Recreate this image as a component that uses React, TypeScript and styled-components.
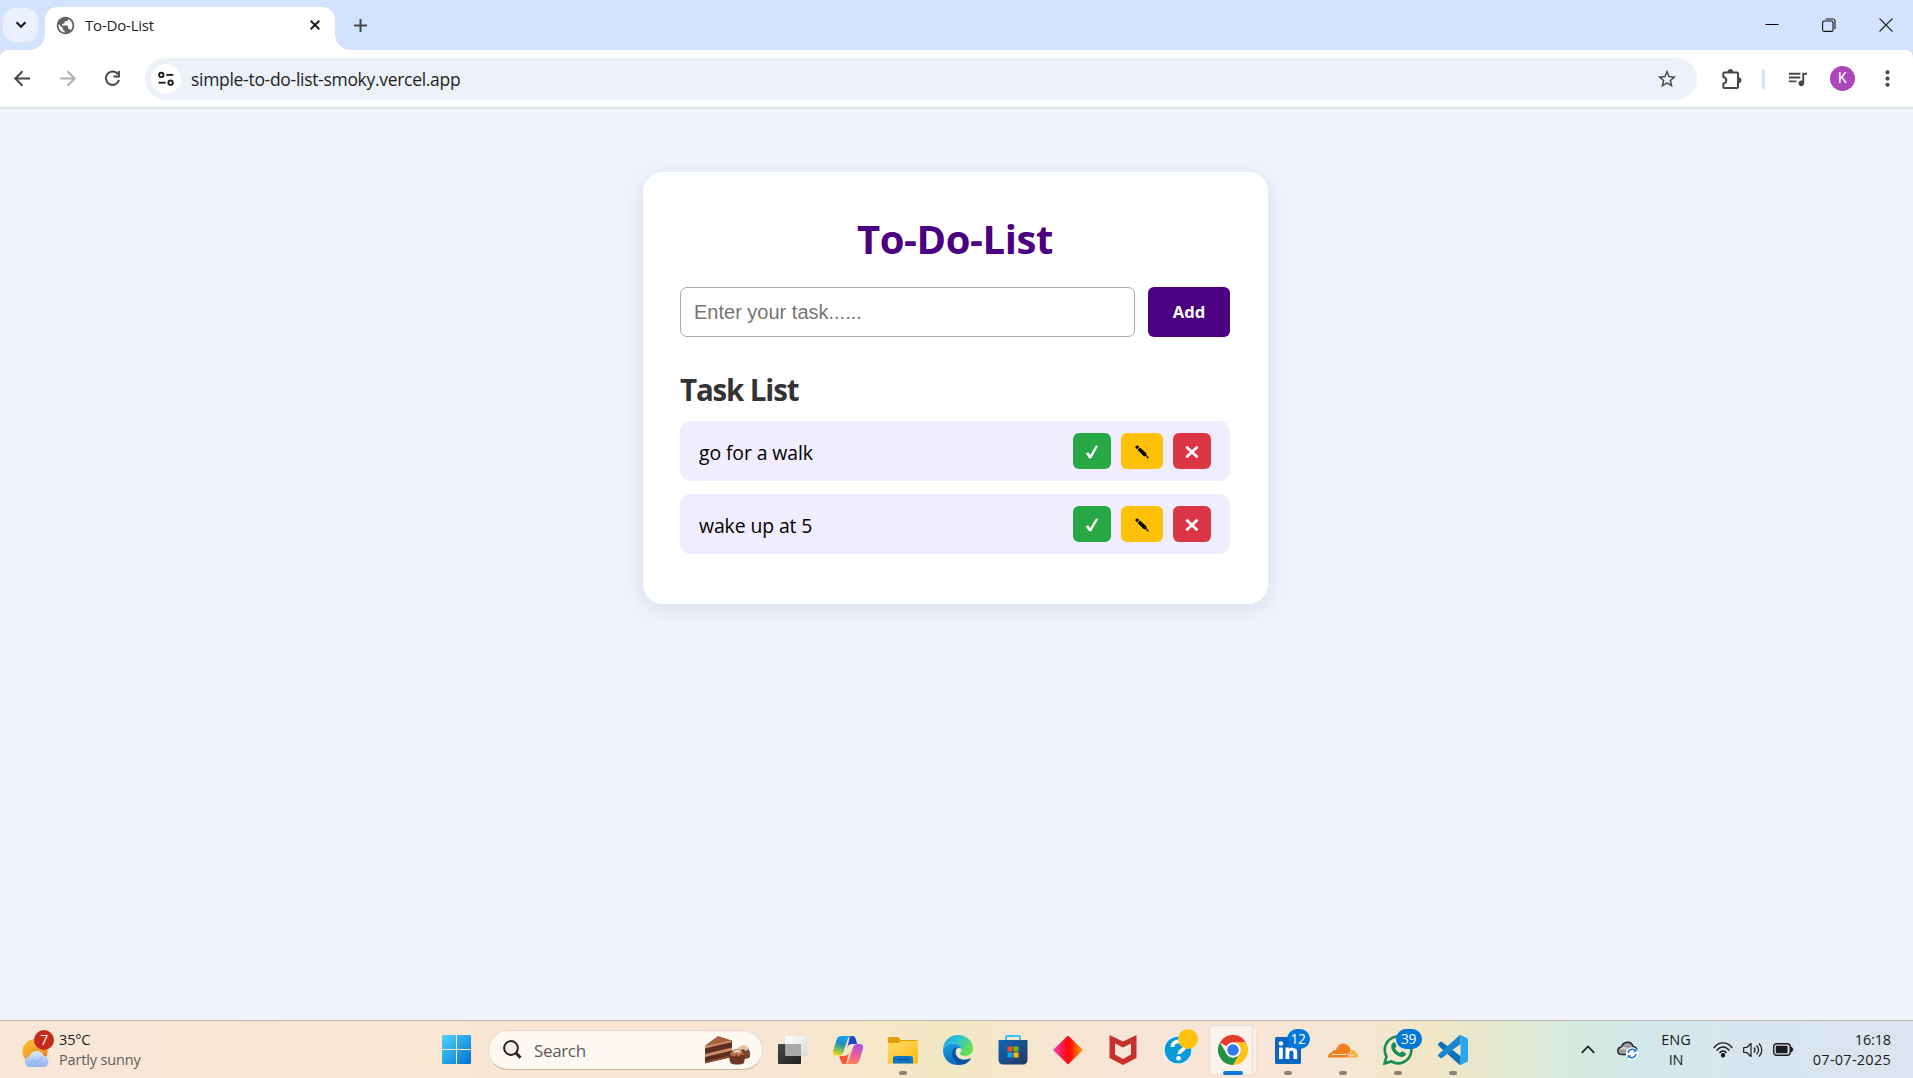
import React, { useState } from "react";
import styled, { createGlobalStyle } from "styled-components";
import { MdMoreVert, MdPublic, MdStarOutline, MdQueueMusic } from "react-icons/md";

const GlobalStyle = createGlobalStyle`
  *, *::before, *::after { box-sizing: border-box; }
  html, body { margin: 0; padding: 0; }
  body { font-family: "Open Sans", "Noto Sans", sans-serif; overflow: hidden; }
  svg { display: block; flex: none; }
  button { font-family: inherit; cursor: pointer; }
`;

const Screen = styled.div`
  width: 100%;
  height: 100vh;
  min-height: 1078px;
  display: flex;
  flex-direction: column;
  background: #f0f4ff;
`;

/* ---------- Browser chrome ---------- */

const TabStrip = styled.div`
  height: 50px;
  flex: none;
  display: flex;
  align-items: flex-end;
  background: #d3e3fd;
`;

const TabSearch = styled.button`
  width: 35px;
  height: 34px;
  margin: 0 7px 8px 3px;
  padding: 0;
  border: 0;
  border-radius: 12px;
  background: #e9f1fe;
  display: flex;
  align-items: center;
  justify-content: center;
`;

const Tab = styled.div`
  position: relative;
  width: 290px;
  height: 43px;
  padding: 0 15px 7px 10px;
  display: flex;
  align-items: center;
  background: #fff;
  border-radius: 13px 13px 0 0;

  &::before,
  &::after {
    content: "";
    position: absolute;
    bottom: 0;
    width: 15px;
    height: 15px;
  }
  &::before {
    left: -15px;
    background: radial-gradient(circle at 0 0, transparent 14.5px, #fff 15px);
  }
  &::after {
    right: -15px;
    background: radial-gradient(circle at 100% 0, transparent 14.5px, #fff 15px);
  }
`;

const TabTitle = styled.span`
  flex: 1;
  margin-left: 9px;
  font-size: 15px;
  letter-spacing: -0.2px;
  line-height: 20px;
  color: #1f1f1f;
`;

const NewTab = styled.div`
  margin: 0 0 18px 19px;
`;

const WindowControls = styled.div`
  height: 50px;
  margin-left: auto;
  padding: 0 20px 1px 0;
  display: flex;
  align-items: center;
  gap: 43px;
`;

const ToolbarWrap = styled.div`
  flex: none;
  background: #d3e3fd;
`;

const Toolbar = styled.div`
  height: 59px;
  display: flex;
  align-items: center;
  padding: 0 13px 0 11px;
  background: #fff;
  border-radius: 8px 8px 0 0;
  border-bottom: 2px solid #e0e2df;
  color: #474747;
`;

const NavGroup = styled.div`
  display: flex;
  gap: 22px;
  margin-right: 21px;
`;

const AddressBar = styled.div`
  flex: 1;
  height: 42px;
  display: flex;
  align-items: center;
  padding: 0 19px 0 6px;
  border-radius: 21px;
  background: #ecf1fa;
`;

const SiteInfo = styled.div`
  width: 30px;
  height: 30px;
  display: flex;
  align-items: center;
  justify-content: center;
  border-radius: 50%;
  background: #fff;
`;

const Url = styled.span`
  flex: 1;
  margin-left: 10px;
  font-size: 17.5px;
  letter-spacing: -0.3px;
  line-height: 24px;
  color: #1f1f1f;
`;

const Divider = styled.div`
  width: 3px;
  height: 20px;
  margin: 0 21px 0 19px;
  border-radius: 2px;
  background: #d3e3fd;
`;

const ExtensionButton = styled.div`
  margin-left: 24px;
`;

const Avatar = styled.div`
  width: 25px;
  height: 25px;
  margin: 0 20px 0 21px;
  border-radius: 50%;
  background: #ab47bc;
  color: #fff;
  font: 14px/25px Roboto, sans-serif;
  text-align: center;
`;

/* ---------- To-do page ---------- */

const Page = styled.main`
  flex: 1;
  display: flex;
  justify-content: center;
  align-items: flex-start;
  padding: 63px 2px 0 0;
  background: #f0f4ff;
`;

const Card = styled.section`
  width: 625px;
  height: 432px;
  padding: 38px 38px 0 37px;
  background: #fff;
  border-radius: 20px;
  box-shadow: 0 5px 25px rgba(0, 0, 0, 0.1);
`;

const Title = styled.h1`
  margin: 0 0 22px;
  padding-top: 2px;
  font-size: 40px;
  line-height: 53px;
  letter-spacing: -0.4px;
  font-weight: 700;
  text-align: center;
  color: #4b0082;
`;

const Form = styled.form`
  display: flex;
  gap: 13px;
`;

const TaskInput = styled.input`
  flex: 1;
  min-width: 0;
  height: 50px;
  padding: 0 13px;
  border: 1px solid #aaa;
  border-radius: 7px;
  outline: 0;
  font: 20px "Liberation Sans", sans-serif;
  &::placeholder { color: #757575; }
`;

const AddButton = styled.button`
  width: 82px;
  height: 50px;
  padding: 0 0 2px;
  border: 0;
  border-radius: 6px;
  background: #4b0082;
  color: #fff;
  font-size: 16.6px;
  font-weight: 700;
`;

const Heading = styled.h2`
  margin: 32px 0 12px;
  padding-top: 1px;
  font-size: 29.5px;
  line-height: 39px;
  letter-spacing: -1.15px;
  font-weight: 700;
  color: #333;
`;

const TaskList = styled.ul`
  margin: 0;
  padding: 0;
  list-style: none;
  display: flex;
  flex-direction: column;
  gap: 13px;
`;

const TaskRow = styled.li`
  height: 60px;
  padding: 0 19px;
  display: flex;
  align-items: center;
  border-radius: 10px;
  background: #efedfe;
`;

const TaskText = styled.span`
  flex: 1;
  padding-top: 4px;
  font-size: 19.4px;
  line-height: 26px;
  letter-spacing: -0.1px;
  color: #000;
`;

const Actions = styled.div`
  display: flex;
  gap: 10px;
`;

const ActionButton = styled.button<{ $tone: string; $wide?: boolean }>`
  width: ${(p) => (p.$wide ? 42 : 38)}px;
  height: 36px;
  padding: 2px 0 0;
  border: 0;
  border-radius: 6px;
  background: ${(p) => p.$tone};
  display: flex;
  align-items: center;
  justify-content: center;
`;

/* ---------- Taskbar ---------- */

const Taskbar = styled.footer`
  height: 58px;
  flex: none;
  display: flex;
  align-items: center;
  border-top: 1px solid #bab4ab;
  background: linear-gradient(90deg, #f8e7d7 0, #f9e6d2 520px, #f7e6d2 760px, #f3e7c2 950px,
    #f6e6d2 1060px, #f7e5d8 1180px, #f6e6d5 1330px, #f2e6c6 1430px, #e5e8cd 1490px,
    #d8e9dc 1560px, #d2e8ea 1640px, #d9e5ee 1730px, #dae5ef 1913px);
`;

const Weather = styled.div`
  width: 420px;
  padding-left: 22px;
  display: flex;
  align-items: center;
  gap: 7px;
`;

const Stack = styled.div<{ $align?: string }>`
  display: flex;
  flex-direction: column;
  align-items: ${(p) => p.$align ?? "flex-start"};
  font-size: 14.5px;
  line-height: 20px;
  color: #1b1b1b;
`;

const Line = styled.span<{ $muted?: boolean; $track?: number }>`
  letter-spacing: ${(p) => p.$track ?? -0.15}px;
  color: ${(p) => (p.$muted ? "#5f5b57" : "inherit")};
`;

const StartButton = styled.div`
  margin: 0 17px 0 22px;
`;

const SearchBox = styled.div`
  width: 275px;
  height: 40px;
  padding: 0 11px 0 14px;
  display: flex;
  align-items: center;
  border: 1px solid #ead9c9;
  border-bottom-color: #c9bbae;
  border-radius: 20px;
  background: #fdf8f2;
`;

const SearchLabel = styled.span`
  flex: 1;
  margin-left: 12px;
  padding-top: 2px;
  font-size: 17px;
  letter-spacing: -0.35px;
  line-height: 24px;
  color: #5c5a57;
`;

const Apps = styled.div`
  display: flex;
  margin-left: 2px;
`;

const AppSlot = styled.div`
  position: relative;
  width: 55px;
  height: 57px;
  display: flex;
  align-items: center;
  justify-content: center;
`;

const ActivePlate = styled.div`
  position: absolute;
  inset: 4px 3px 3px 4px;
  border: 1px solid #eadfd5;
  border-radius: 5px;
  background: linear-gradient(90deg, #faf2eb 42px, #e9dfd5 42px, #e9dfd5 43px, #f9efe6 43px);
`;

const AppIcon = styled.div`
  position: relative;
  padding-top: 1px;
`;

const Indicator = styled.div<{ $active?: boolean }>`
  position: absolute;
  bottom: 3px;
  left: 50%;
  width: ${(p) => (p.$active ? 20 : 8)}px;
  height: 4px;
  border-radius: 2px;
  transform: translateX(-50%);
  background: ${(p) => (p.$active ? "#0a78d4" : "#8c8378")};
`;

const Badge = styled.span<{ $width: number; $left: number; $top: number; $color: string }>`
  position: absolute;
  left: ${(p) => p.$left}px;
  top: ${(p) => p.$top}px;
  width: ${(p) => p.$width}px;
  height: 20px;
  border-radius: 10px;
  background: ${(p) => p.$color};
  color: #fff;
  font-size: 13.8px;
  line-height: 20px;
  letter-spacing: -0.5px;
  text-align: center;
`;

const Tray = styled.div`
  margin-left: auto;
  padding-right: 22px;
  display: flex;
  align-items: center;
`;

const TrayItem = styled.div<{ $gap: number }>`
  margin-right: ${(p) => p.$gap}px;
`;

const WeatherIcon = styled.div`
  position: relative;
  width: 30px;
  height: 38px;
  margin-top: -2px;
  display: flex;
  align-items: flex-end;
`;

/* ---------- Icons ---------- */

const Arrow = ({ color, flip }: { color: string; flip?: boolean }) => (
  <svg width="23" height="23" viewBox="0 0 23 23" fill="none" stroke={color} strokeWidth="2">
    <path d={flip ? "M4 11.5H18M11.5 4.3 18.7 11.5 11.5 18.7" : "M19 11.5H5M11.5 4.3 4.3 11.5l7.2 7.2"} />
  </svg>
);

const Reload = () => (
  <svg width="23" height="23" viewBox="0 0 23 23">
    <path d="M16.9 7.1A6.7 6.7 0 1 0 18 13" fill="none" stroke="#474747" strokeWidth="2" />
    <path d="M18.9 4v6.4h-6.4V8.5h4.4V4z" fill="#474747" />
  </svg>
);

const Tune = () => (
  <svg width="18" height="18" viewBox="0 0 18 18" fill="none" stroke="#1f1f1f" strokeWidth="1.9">
    <circle cx="4.3" cy="4.9" r="2.2" />
    <path d="M9.3 4.9h7" />
    <circle cx="13.6" cy="12.7" r="2.2" />
    <path d="M1.6 12.7h7" />
  </svg>
);

const Puzzle = () => (
  <svg width="22" height="22" viewBox="0 0 22 22">
    <path
      d="M3.3 4.6H16a1 1 0 0 1 1 1V19a1 1 0 0 1-1 1H3.3a1 1 0 0 1-1-1v-3.3c2.2-.4 3-1.7 3-3.4s-.8-3-3-3.4V5.6a1 1 0 0 1 1-1z"
      fill="none"
      stroke="#474747"
      strokeWidth="2"
    />
    <path d="M6.9 4a2.5 2.5 0 0 1 5 0zM17.6 9.8a2.5 2.5 0 0 1 0 5z" fill="#474747" stroke="#474747" />
  </svg>
);

const Check = () => (
  <svg width="14" height="14" viewBox="0 0 14 14">
    <path d="M.7 8.600 3.100 7.200 5.200 10 10.800.8h2.400L6.300 13.300H4.100z" fill="#fff" />
  </svg>
);

const Pencil = () => (
  <svg width="14" height="14" viewBox="0 0 14 14">
    <path d="M.3 2.400Q.3.500 2.300.500l1.900 1.300L2 4.300zM2.600 5 4.900 2.500l6.700 6.100-.3 1 1 1.900-2.700-.3-1-.2zM12 11.600l1.100-.3.5 2.100-1.900-.5z" fill="#000" />
  </svg>
);

const Cross = () => (
  <svg width="14" height="14" viewBox="0 0 14 14" stroke="#fff" strokeWidth="2.700">
    <path d="m1.300 1.700 11.200 10.600M12.500 1.700 1.300 12.300" />
  </svg>
);

const SunCloud = () => (
  <svg width="30" height="30" viewBox="0 0 30 30">
    <defs>
      <linearGradient id="sun" x1="0" y1="0" x2="1" y2="1">
        <stop offset="0" stopColor="#f5c63a" />
        <stop offset="1" stopColor="#ef7416" />
      </linearGradient>
      <linearGradient id="cloud" x1="0" y1="0" x2="0" y2="1">
        <stop offset="0" stopColor="#dbe9fb" />
        <stop offset="1" stopColor="#8db2ee" />
      </linearGradient>
    </defs>
    <circle cx="13" cy="13.5" r="12.5" fill="url(#sun)" />
    <path d="M8 29a5.3 5.3 0 0 1-.7-10.5 7.8 7.8 0 0 1 14.6-.8A5.8 5.8 0 0 1 22 29z" fill="url(#cloud)" />
    <path d="M9 22c3 0 5 1 6 3 1-3 3-4.500 6-4.500" fill="none" stroke="#79a2e8" strokeWidth="1" opacity=".7" />
  </svg>
);

const WindowsLogo = () => (
  <svg width="29" height="29" viewBox="0 0 29 29">
    <defs>
      <linearGradient id="win" gradientUnits="userSpaceOnUse" x1="0" y1="0" x2="29" y2="29">
        <stop offset="0" stopColor="#4fd4fb" />
        <stop offset="1" stopColor="#0171d0" />
      </linearGradient>
    </defs>
    <path d="M1 0h13v14H0V1zM15 0h13l1 1v13H15zM0 15h14v14H1l-1-1zM15 15h14v13l-1 1H15z" fill="url(#win)" />
  </svg>
);

const SearchIcon = () => (
  <svg width="19" height="19" viewBox="0 0 19 19" fill="none" stroke="#262626">
    <circle cx="8" cy="8" r="6.900" strokeWidth="2" fill="#efefec" />
    <path d="m13 13 4.500 4.700" strokeWidth="3" />
  </svg>
);

const Cake = () => (
  <svg width="46" height="30" viewBox="0 0 46 30">
    <path d="M0 10.500 13 1l14 4.500L26 8z" fill="#a8603f" />
    <path d="M0 11 27 5v17L0 28z" fill="#5b2c20" />
    <path d="M0 11 27 5v2L0 13.500zM0 19l27-6.500v3L0 22z" fill="#d08d65" />
    <path d="M0 26.500 27 20v2L0 28.500z" fill="#8d4a33" />
    <path d="M32 18c0-8 12-9 13 0v4c-3 3-9 2-13 0z" fill="#7c432f" />
    <path d="M33 14c2-5 9-5 11 0l-3 2-3-2-3 2z" fill="#e4c0a0" />
    <path d="M24 22c0-10 15-10 16 0l-1 6c-3 2-10 2-13.500 0z" fill="#6d3525" />
    <path d="M25 20c2-7 12-7 14 0l-3-.5-2 2-3-1.500-2 1.500z" fill="#b97250" />
    <path d="M28 17c2-3 7-3 8 0l-2 1-2-1-2 1z" fill="#f0d6b9" />
  </svg>
);

const TaskView = () => (
  <svg width="30" height="28" viewBox="0 0 30 28">
    <defs>
      <linearGradient id="tv1" x1="0" y1="0" x2="1" y2="1">
        <stop offset="0" stopColor="#474747" />
        <stop offset="1" stopColor="#202020" />
      </linearGradient>
      <linearGradient id="tv2" x1="0" y1="0" x2="1" y2="1">
        <stop offset="0" stopColor="#fff" />
        <stop offset="1" stopColor="#d9d9d9" />
      </linearGradient>
    </defs>
    <rect y="8" width="23" height="20" rx="1" fill="url(#tv1)" />
    <rect x="7.500" width="22" height="20" rx="1" fill="url(#tv2)" />
    <path d="M7.500 8H23v12H7.500z" fill="#a9a9a9" />
  </svg>
);

const Copilot = () => (
  <svg width="30" height="28" viewBox="0 0 30 28">
    <defs>
      <linearGradient id="cp1" x1=".6" y1="0" x2=".3" y2="1">
        <stop offset="0" stopColor="#12a5ee" />
        <stop offset=".4" stopColor="#1b8fc9" />
        <stop offset=".7" stopColor="#6fbb5a" />
        <stop offset="1" stopColor="#f4d51c" />
      </linearGradient>
      <linearGradient id="cp2" x1=".7" y1="0" x2=".3" y2="1">
        <stop offset="0" stopColor="#a354e8" />
        <stop offset=".5" stopColor="#ed5c9b" />
        <stop offset="1" stopColor="#fb8a4c" />
      </linearGradient>
    </defs>
    <path d="M17 0h2.500c2 0 2.600 1 3.200 3l1.500 5h-5c-3 0-4 1-5 4z" fill="#1e45cf" />
    <path d="M13 28h-2c-2 0-2.600-1-3.200-3l-1.500-5h4c3 0 5-1 6-4z" fill="#f3573a" />
    <path d="M8.500 0H19c-3 0-4 2-5 5l-3 9c-1.200 4-2.500 5.500-5 5.500H3c-3 0-3.600-2.500-2.700-5.500l3-9.500C4.300 1.500 5.500 0 8.500 0z" fill="url(#cp1)" />
    <path d="M21.500 28H11c3 0 4-2 5-5l3-9c1.200-4 2.500-6 5-6h3c3 0 3.600 2.500 2.700 5.500l-3 10c-1 3-2.200 4.500-5.200 4.500z" fill="url(#cp2)" />
  </svg>
);

const Folder = () => (
  <svg width="30" height="27" viewBox="0 0 30 27">
    <defs>
      <linearGradient id="fd" x1="0" y1="0" x2="1" y2="1">
        <stop offset="0" stopColor="#ffdb63" />
        <stop offset="1" stopColor="#fbb91a" />
      </linearGradient>
    </defs>
    <path d="M0 1.500A1.500 1.500 0 0 1 1.500 0H10l3 3h15.500A1.500 1.500 0 0 1 30 4.500V10H0z" fill="#df9f08" />
    <path d="M0 6h10.500l3-2H30v22.500H0z" fill="url(#fd)" />
    <path d="M5 26.500v-5A2.500 2.500 0 0 1 7.500 19h15a2.500 2.500 0 0 1 2.500 2.500v5z" fill="#0d76c9" />
    <path d="M9 22.500h12" stroke="#084c85" strokeWidth="1.200" />
  </svg>
);

const Edge = () => (
  <svg width="30" height="30" viewBox="0 0 30 30">
    <defs>
      <linearGradient id="eg1" x1="0" y1="0" x2="1" y2=".5">
        <stop offset="0" stopColor="#1d9fe0" />
        <stop offset=".5" stopColor="#2fc3d4" />
        <stop offset="1" stopColor="#66e04f" />
      </linearGradient>
      <linearGradient id="eg2" x1="0" y1="0" x2=".6" y2="1">
        <stop offset="0" stopColor="#1aa4e6" />
        <stop offset="1" stopColor="#0a62ba" />
      </linearGradient>
    </defs>
    <path d="M0 15C0 6 7 0 15 0s15 6 15 13c0 5-3.500 8-8 8-3 0-5-1-5-2.500s1.500-1.500 1.500-4c0-3-4-6-8.500-6C5 8.500 1 11 0 15z" fill="url(#eg1)" />
    <path d="M0 15c1-4 5-6.500 10-6.500 4.500 0 8.500 3 8.500 6 0-2-6-3-6 3 0 7 6 10 12 8l2.500-1C24 28 20 30 15 30 6.500 30 0 24 0 15z" fill="url(#eg2)" />
    <path d="M10 15c-3 7 2 14.500 9 14.500 4 0 7-3 8.700-5.500.3-.6-.2-1-.7-.7-8 4-15-1-14.500-7 .1-2 1-3.500 2-4-2 0-3.800 1-4.500 2.700z" fill="#0b55a3" />
  </svg>
);

const Store = () => (
  <svg width="30" height="30" viewBox="0 0 30 30">
    <defs>
      <linearGradient id="st" x1="0" y1="0" x2="1" y2="1">
        <stop offset="0" stopColor="#0f67b6" />
        <stop offset="1" stopColor="#24375f" />
      </linearGradient>
    </defs>
    <path d="M8 5V2.500A1.500 1.500 0 0 1 9.500 1h11A1.500 1.500 0 0 1 22 2.500V5" fill="none" stroke="#31c4f3" strokeWidth="2" />
    <path d="M.5 5h29v20a4.500 4.500 0 0 1-4.500 4.500H5A4.500 4.500 0 0 1 .5 25z" fill="url(#st)" />
    <path d="M9.500 11.500h5v5h-5z" fill="#f25022" />
    <path d="M15.500 11.500h5v5h-5z" fill="#7fba00" />
    <path d="M9.500 17.500h5v5h-5z" fill="#00a4ef" />
    <path d="M15.500 17.500h5v5h-5z" fill="#ffb900" />
  </svg>
);

const Diamond = () => (
  <svg width="30" height="30" viewBox="0 0 30 30">
    <defs>
      <linearGradient id="dm">
        <stop offset="0" stopColor="#ee3fc6" />
        <stop offset=".45" stopColor="#fd0b17" />
        <stop offset=".6" stopColor="#fc1608" />
        <stop offset="1" stopColor="#ffab0a" />
      </linearGradient>
    </defs>
    <path d="M15 .5 30 15 15 29.500 0 15z" fill="url(#dm)" />
  </svg>
);

const McAfee = () => (
  <svg width="28" height="30" viewBox="0 0 28 30">
    <path d="M.5 0 14 6.500 27.500 0v23L14 30 .5 23zM6 8.500v11l8 4.500 8-4.500v-11l-8 4z" fill="#c6302d" fillRule="evenodd" />
  </svg>
);

const Help = () => (
  <svg width="30" height="30" viewBox="0 0 30 30">
    <circle cx="15" cy="15" r="15" fill="#e6f3f8" />
    <circle cx="15" cy="15" r="13.300" fill="#0b9ad9" />
    <path d="M9.500 12c0-7.500 12-7.500 12-.5 0 4-5.500 4-5.500 7.500" fill="none" stroke="#fff" strokeWidth="3.700" />
    <circle cx="15.600" cy="23.300" r="2.300" fill="#fff" />
  </svg>
);

const ChromeLogo = () => (
  <svg width="30" height="30" viewBox="0 0 30 30">
    <path d="M2 7.500A15 15 0 0 1 28 7.500H15A7.500 7.500 0 0 0 8.500 11.300z" fill="#e33b2e" />
    <path d="M28 7.500A15 15 0 0 1 15 30l6.500-11.200A7.500 7.500 0 0 0 15 7.500z" fill="#fcc31e" />
    <path d="M15 30A15 15 0 0 1 2 7.500l6.500 11.200a7.500 7.500 0 0 0 13 0z" fill="#229342" />
    <circle cx="15" cy="15" r="7.500" fill="#fff" />
    <circle cx="15" cy="15" r="5.800" fill="#2f7bee" />
  </svg>
);

const LinkedIn = () => (
  <svg width="26" height="27" viewBox="0 0 26 27">
    <rect width="26" height="27" rx="1.500" fill="#0b66c2" />
    <path d="M4 10.500h3.800V22H4zM10.500 10.500h3.700v1.600c2-3 8-2.600 8 3.400V22h-3.800v-6c0-3.500-4.100-3.200-4.100 0v6h-3.800z" fill="#fff" />
    <circle cx="5.900" cy="6.500" r="2.300" fill="#fff" />
  </svg>
);

const Cloudflare = () => (
  <svg width="30" height="15" viewBox="0 0 30 15">
    <path d="M0 14.500c0-3 1.500-4.800 4-5 .2-2 2-3 3.800-2C9 3 12 .500 15 .500c4 0 7 3 7.500 6.500L22 14.500z" fill="#f38020" />
    <path d="M22 14.500 23.500 7c3.500 0 6.500 3 6.500 7.500z" fill="#faae40" />
    <path d="M4 11.500h14.500c1.500 0 2-1 2.200-2M20 14.500l.8-2.500h5.500" fill="none" stroke="#fbe5cf" strokeWidth="1" />
  </svg>
);

const WhatsApp = () => (
  <svg width="30" height="30" viewBox="0 0 30 30">
    <path d="M1.500 28.500 3.500 21.500A13.300 13.300 0 1 1 8.500 26.500z" fill="none" stroke="#168c58" strokeWidth="2.600" />
    <path d="M9.500 8c1-1.200 2.300-1 2.700 0l1.200 2.800c.3.900-1.200 2-1.400 2.500 1 2.200 2.700 3.800 5 4.800.8-.2 1.600-2 2.500-1.700l3 1.500c.8.500.2 2.200-.6 2.900-4.500 4-14-3.500-13.700-9.300.1-1.400.6-2.700 1.300-3.500z" fill="#168c58" />
  </svg>
);

const VSCode = () => (
  <svg width="30" height="30" viewBox="0 0 30 30">
    <path d="m22.500 0 6.500 3c.6.300 1 .9 1 1.500v21c0 .6-.4 1.200-1 1.500l-6.500 3z" fill="#2aa6f1" />
    <path d="M.5 8.500 2.300 7c.5-.4 1.200-.4 1.700 0l18.500 14v9c-.6 0-1.200-.3-1.600-.700L.5 10.700c-.6-.600-.6-1.600 0-2.200z" fill="#0b70b8" />
    <path d="m.5 21.500 1.800 1.500c.5.400 1.200.4 1.700 0L22.500 9V0c-.6 0-1.200.3-1.600.7L.5 19.300c-.6.600-.6 1.600 0 2.200z" fill="#1787cf" />
  </svg>
);

const OneDrive = () => (
  <svg width="22" height="20" viewBox="0 0 22 20">
    <path d="M5 14.500C-.5 14.500-.5 7.500 4.500 7 6 1 14.500.500 16 6.500c5 .5 5 7.500 0 8z" fill="#9d9d9d" stroke="#262626" strokeWidth="1.500" />
    <path d="M4 9c3-2 6-1 9 3" stroke="#d4d4d4" strokeWidth="2" fill="none" />
    <circle cx="15" cy="13.500" r="6.200" fill="#fff" />
    <path d="M11 13a4.200 4.200 0 0 1 7.500-2M19 14a4.200 4.200 0 0 1-7.500 2" fill="none" stroke="#1c74cc" strokeWidth="1.500" />
    <path d="M19.500 8.500v3.300h-3.300zM10.500 18.500v-3.300h3.300z" fill="#1c74cc" />
  </svg>
);

const Wifi = () => (
  <svg width="20" height="16" viewBox="0 0 20 16" fill="none" stroke="#1b1b1b" strokeWidth="1.400">
    <path d="M.7 6C6-.8 14-.8 19.300 6M3.600 8.500c3.700-4.700 9.100-4.700 12.800 0M6.500 11c2-2.700 5-2.700 7 0" />
    <circle cx="10" cy="13.300" r="1.500" fill="#1b1b1b" />
  </svg>
);

const Speaker = () => (
  <svg width="20" height="16" viewBox="0 0 20 16" fill="none" stroke="#1b1b1b" strokeWidth="1.200">
    <path d="M.7 5.500h3L8 1.500v13l-4.300-4h-3z" strokeLinejoin="round" />
    <path d="M11 5.500c1.300 1.500 1.300 3.500 0 5M13.500 3.500c2.500 2.700 2.500 6.300 0 9M16 1.500c3.700 3.900 3.700 9.100 0 13" />
  </svg>
);

const Battery = () => (
  <svg width="21" height="13" viewBox="0 0 21 13">
    <rect x=".7" y=".7" width="16.500" height="11.600" rx="3" fill="none" stroke="#1b1b1b" strokeWidth="1.400" />
    <rect x="2.800" y="2.800" width="11.800" height="7.400" rx="1" fill="#1b1b1b" />
    <path d="M18 4.200c2.300 0 2.300 4.600 0 4.600z" fill="#1b1b1b" stroke="#1b1b1b" />
  </svg>
);

/* ---------- Content ---------- */

type TaskbarApp = {
  name: string;
  icon: React.ReactNode;
  running?: boolean;
  active?: boolean;
  badge?: { text: string; width: number; left: number; top: number; color: string };
};

const apps: TaskbarApp[] = [
  { name: "taskview", icon: <TaskView /> },
  { name: "copilot", icon: <Copilot /> },
  { name: "files", icon: <Folder />, running: true },
  { name: "edge", icon: <Edge /> },
  { name: "store", icon: <Store /> },
  { name: "diamond", icon: <Diamond /> },
  { name: "mcafee", icon: <McAfee /> },
  { name: "help", icon: <Help />, badge: { text: "", width: 20, left: 15, top: -5, color: "#ffc20e" } },
  { name: "chrome", icon: <ChromeLogo />, active: true },
  { name: "linkedin", icon: <LinkedIn />, running: true, badge: { text: "12", width: 23, left: 12, top: -7, color: "#0078d7" } },
  { name: "cloudflare", icon: <Cloudflare />, running: true },
  { name: "whatsapp", icon: <WhatsApp />, running: true, badge: { text: "39", width: 26, left: 13, top: -5, color: "#0078d7" } },
  { name: "vscode", icon: <VSCode />, running: true },
];

function BrowserChrome() {
  return (
    <>
      <TabStrip>
        <TabSearch aria-label="Search tabs">
          <svg width="12" height="8" viewBox="0 0 12 8" fill="none" stroke="#1f1f1f" strokeWidth="2.300">
            <path d="m1.500 1.200 4.500 4.500 4.500-4.500" />
          </svg>
        </TabSearch>
        <Tab>
          <MdPublic size={21} color="#5f6368" />
          <TabTitle>To-Do-List</TabTitle>
          <svg width="10" height="10" viewBox="0 0 10 10" stroke="#1f1f1f" strokeWidth="2">
            <path d="m.7.700 8.600 8.600M9.300.700.700 9.300" />
          </svg>
        </Tab>
        <NewTab>
          <svg width="13" height="13" viewBox="0 0 13 13" stroke="#474747" strokeWidth="2">
            <path d="M6.500 0v13M0 6.500h13" />
          </svg>
        </NewTab>
        <WindowControls>
          <svg width="14" height="14" viewBox="0 0 14 14">
            <path d="M.5 6h13v1H.5z" fill="#000" />
          </svg>
          <svg width="14" height="14" viewBox="0 0 14 14" fill="none" stroke="#111" strokeWidth="1.100">
            <path d="M3.500 1h7.500a2 2 0 0 1 2 2v8" />
            <rect x=".6" y="3" width="10.400" height="10.400" rx="1.500" />
          </svg>
          <svg width="14" height="14" viewBox="0 0 14 14" stroke="#222" strokeWidth="1.100">
            <path d="m.5.500 13 13M13.500.500.500 13.500" />
          </svg>
        </WindowControls>
      </TabStrip>
      <ToolbarWrap>
        <Toolbar>
          <NavGroup>
            <Arrow color="#474747" />
            <Arrow color="#b0b0b0" flip />
            <Reload />
          </NavGroup>
          <AddressBar>
            <SiteInfo>
              <Tune />
            </SiteInfo>
            <Url>simple-to-do-list-smoky.vercel.app</Url>
            <MdStarOutline size={22} />
          </AddressBar>
          <ExtensionButton>
            <Puzzle />
          </ExtensionButton>
          <Divider />
          <MdQueueMusic size={23} />
          <Avatar>K</Avatar>
          <MdMoreVert size={25} />
        </Toolbar>
      </ToolbarWrap>
    </>
  );
}

function TodoCard() {
  const [value, setValue] = useState("");
  const [tasks, setTasks] = useState(["go for a walk", "wake up at 5"]);

  const addTask = (event: React.FormEvent) => {
    event.preventDefault();
    if (!value.trim()) return;
    setTasks([...tasks, value.trim()]);
    setValue("");
  };

  return (
    <Card>
      <Title>To-Do-List</Title>
      <Form onSubmit={addTask}>
        <TaskInput placeholder="Enter your task......" value={value} onChange={(e) => setValue(e.target.value)} />
        <AddButton type="submit">Add</AddButton>
      </Form>
      <Heading>Task List</Heading>
      <TaskList>
        {tasks.map((task, index) => (
          <TaskRow key={task}>
            <TaskText>{task}</TaskText>
            <Actions>
              <ActionButton $tone="#28a745" aria-label="Complete">
                <Check />
              </ActionButton>
              <ActionButton $tone="#ffc107" $wide aria-label="Edit">
                <Pencil />
              </ActionButton>
              <ActionButton
                $tone="#dc3545"
                aria-label="Delete"
                onClick={() => setTasks(tasks.filter((_, i) => i !== index))}
              >
                <Cross />
              </ActionButton>
            </Actions>
          </TaskRow>
        ))}
      </TaskList>
    </Card>
  );
}

function SystemTaskbar() {
  return (
    <Taskbar>
      <Weather>
        <WeatherIcon>
          <SunCloud />
          <Badge $width={20} $left={12} $top={0} $color="#c42b1c">7</Badge>
        </WeatherIcon>
        <Stack>
          <Line>35°C</Line>
          <Line $muted>Partly sunny</Line>
        </Stack>
      </Weather>
      <StartButton>
        <WindowsLogo />
      </StartButton>
      <SearchBox>
        <SearchIcon />
        <SearchLabel>Search</SearchLabel>
        <Cake />
      </SearchBox>
      <Apps>
        {apps.map((app) => (
          <AppSlot key={app.name}>
            {app.active && <ActivePlate />}
            <AppIcon>
              {app.icon}
              {app.badge && (
                <Badge $width={app.badge.width} $left={app.badge.left} $top={app.badge.top} $color={app.badge.color}>
                  {app.badge.text}
                </Badge>
              )}
            </AppIcon>
            {(app.running || app.active) && <Indicator $active={app.active} />}
          </AppSlot>
        ))}
      </Apps>
      <Tray>
        <TrayItem $gap={22}>
          <svg width="14" height="9" viewBox="0 0 14 9" fill="none" stroke="#1b1b1b" strokeWidth="1.700">
            <path d="m.8 7.800 6.200-6.300 6.200 6.300" />
          </svg>
        </TrayItem>
        <TrayItem $gap={22}>
          <OneDrive />
        </TrayItem>
        <TrayItem $gap={22}>
          <Stack $align="center">
            <Line $track={0}>ENG</Line>
            <Line>IN</Line>
          </Stack>
        </TrayItem>
        <TrayItem $gap={10}>
          <Wifi />
        </TrayItem>
        <TrayItem $gap={10}>
          <Speaker />
        </TrayItem>
        <TrayItem $gap={19}>
          <Battery />
        </TrayItem>
        <Stack $align="flex-end">
          <Line>16:18</Line>
          <Line $track={0.25}>07-07-2025</Line>
        </Stack>
      </Tray>
    </Taskbar>
  );
}

export default function App() {
  return (
    <Screen>
      <GlobalStyle />
      <BrowserChrome />
      <Page>
        <TodoCard />
      </Page>
      <SystemTaskbar />
    </Screen>
  );
}
